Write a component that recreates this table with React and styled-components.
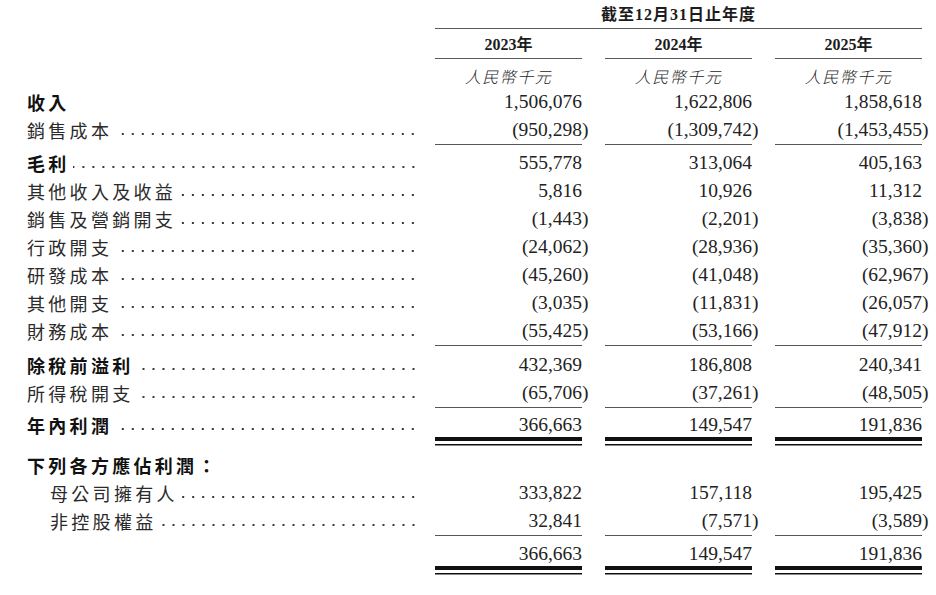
import styled, { createGlobalStyle } from "styled-components";

const GlobalStyle = createGlobalStyle`
  body {
    margin: 0;
    background: #ffffff;
    color: #1c1c1c;
  }
`;

const Page = styled.div`
  width: 936px;
  height: 595px;
  padding-left: 27px;
  box-sizing: border-box;
  overflow: hidden;
`;

const Row = styled.div`
  display: grid;
  grid-template-columns: 385px repeat(3, 147px);
  column-gap: 23px;
  align-items: start;
  margin-top: ${({ $gap }) => $gap || 0}px;
`;

const PeriodHead = styled.div`
  grid-column: 2 / span 3;
  padding: 4px 0 3px;
  line-height: 21px;
  text-align: center;
  font-family: "Liberation Serif", "Noto Sans CJK TC", serif;
  font-size: 16px;
  font-weight: 700;
  letter-spacing: 1px;
  border-bottom: 1.5px solid #5a5a5a;
`;

const YearHead = styled.div`
  grid-column: ${({ $first }) => ($first ? "2" : "auto")};
  padding: 5px 0 3px;
  line-height: 21px;
  text-align: center;
  font-family: "Liberation Serif", "Noto Sans CJK TC", serif;
  font-size: 16px;
  font-weight: 700;
  border-bottom: 1.5px solid #5a5a5a;
`;

const UnitHead = styled.div`
  grid-column: ${({ $first }) => ($first ? "2" : "auto")};
  padding: 6.5px 0 1.5px;
  line-height: 21px;
  text-align: center;
  font-family: "Noto Sans CJK TC", sans-serif;
  font-size: 16px;
  font-style: italic;
  font-weight: 300;
  letter-spacing: 1.5px;
`;

const Label = styled.div`
  display: flex;
  height: ${({ $h }) => $h}px;
  line-height: 28px;
  margin-right: -6px;
  padding-left: ${({ $indent }) => ($indent ? 23 : 0)}px;
  font-family: "Noto Sans CJK TC", sans-serif;
  font-size: 18px;
  letter-spacing: 3.3px;
  font-weight: ${({ $bold }) => ($bold ? 700 : 400)};
  color: ${({ $bold }) => ($bold ? "#111" : "#2a2a2a")};
  white-space: nowrap;
`;

const Leader = styled.span`
  flex: 1;
  margin-left: 3px;
  background-image: radial-gradient(circle at 5px 18px, #3a3a3a 0.9px, transparent 1.5px);
  background-size: 10px 28px;
  background-repeat: repeat-x;
  background-position: right top;
`;

const Value = styled.div`
  height: ${({ $h }) => $h}px;
  line-height: 28px;
  text-align: right;
  font-family: "Liberation Serif", serif;
  font-size: 19.5px;
  color: #222;
  white-space: nowrap;
  border-bottom: ${({ $rule }) =>
    $rule === "double" ? "4px solid #111" : $rule === "single" ? "1.5px solid #555" : "0"};
  box-shadow: ${({ $rule }) =>
    $rule === "double" ? "0 3px 0 #fff, 0 4.5px 0 #111" : "none"};
`;

const Paren = styled.span`
  margin-right: -6.5px;
`;

const rows = [
  { label: "收入", bold: true, dots: false, values: ["1,506,076", "1,622,806", "1,858,618"] },
  { label: "銷售成本", values: ["(950,298)", "(1,309,742)", "(1,453,455)"], rule: "single" },
  { label: "毛利", bold: true, gap: 3.5, values: ["555,778", "313,064", "405,163"] },
  { label: "其他收入及收益", values: ["5,816", "10,926", "11,312"] },
  { label: "銷售及營銷開支", values: ["(1,443)", "(2,201)", "(3,838)"] },
  { label: "行政開支", values: ["(24,062)", "(28,936)", "(35,360)"] },
  { label: "研發成本", values: ["(45,260)", "(41,048)", "(62,967)"] },
  { label: "其他開支", values: ["(3,035)", "(11,831)", "(26,057)"] },
  { label: "財務成本", values: ["(55,425)", "(53,166)", "(47,912)"], rule: "single" },
  { label: "除稅前溢利", bold: true, gap: 5.5, values: ["432,369", "186,808", "240,341"] },
  { label: "所得稅開支", values: ["(65,706)", "(37,261)", "(48,505)"], rule: "single" },
  { label: "年內利潤", bold: true, gap: 3, h: 26, values: ["366,663", "149,547", "191,836"], rule: "double" },
  { label: "下列各方應佔利潤：", bold: true, gap: 9.5, dots: false, values: [] },
  { label: "母公司擁有人", indent: true, values: ["333,822", "157,118", "195,425"] },
  { label: "非控股權益", indent: true, values: ["32,841", "(7,571)", "(3,589)"], rule: "single" },
  { label: "", dots: false, gap: 4, h: 26, values: ["366,663", "149,547", "191,836"], rule: "double" },
];

const years = ["2023年", "2024年", "2025年"];

function Amount({ text }) {
  if (text.startsWith("(")) {
    return (
      <>
        {text.slice(0, -1)}
        <Paren>)</Paren>
      </>
    );
  }
  return text;
}

export default function App() {
  return (
    <>
      <GlobalStyle />
      <Page>
        <Row>
          <PeriodHead>截至12月31日止年度</PeriodHead>
        </Row>
        <Row>
          {years.map((y, i) => (
            <YearHead key={y} $first={i === 0}>
              {y}
            </YearHead>
          ))}
        </Row>
        <Row>
          {years.map((y, i) => (
            <UnitHead key={y} $first={i === 0}>
              人民幣千元
            </UnitHead>
          ))}
        </Row>
        {rows.map((row, idx) => {
          const h = row.h || 28;
          return (
            <Row key={idx} $gap={row.gap}>
              <Label $h={h} $bold={row.bold} $indent={row.indent}>
                {row.label}
                {row.dots !== false && <Leader />}
              </Label>
              {row.values.map((v, i) => (
                <Value key={i} $h={h} $rule={row.rule}>
                  <Amount text={v} />
                </Value>
              ))}
            </Row>
          );
        })}
      </Page>
    </>
  );
}
